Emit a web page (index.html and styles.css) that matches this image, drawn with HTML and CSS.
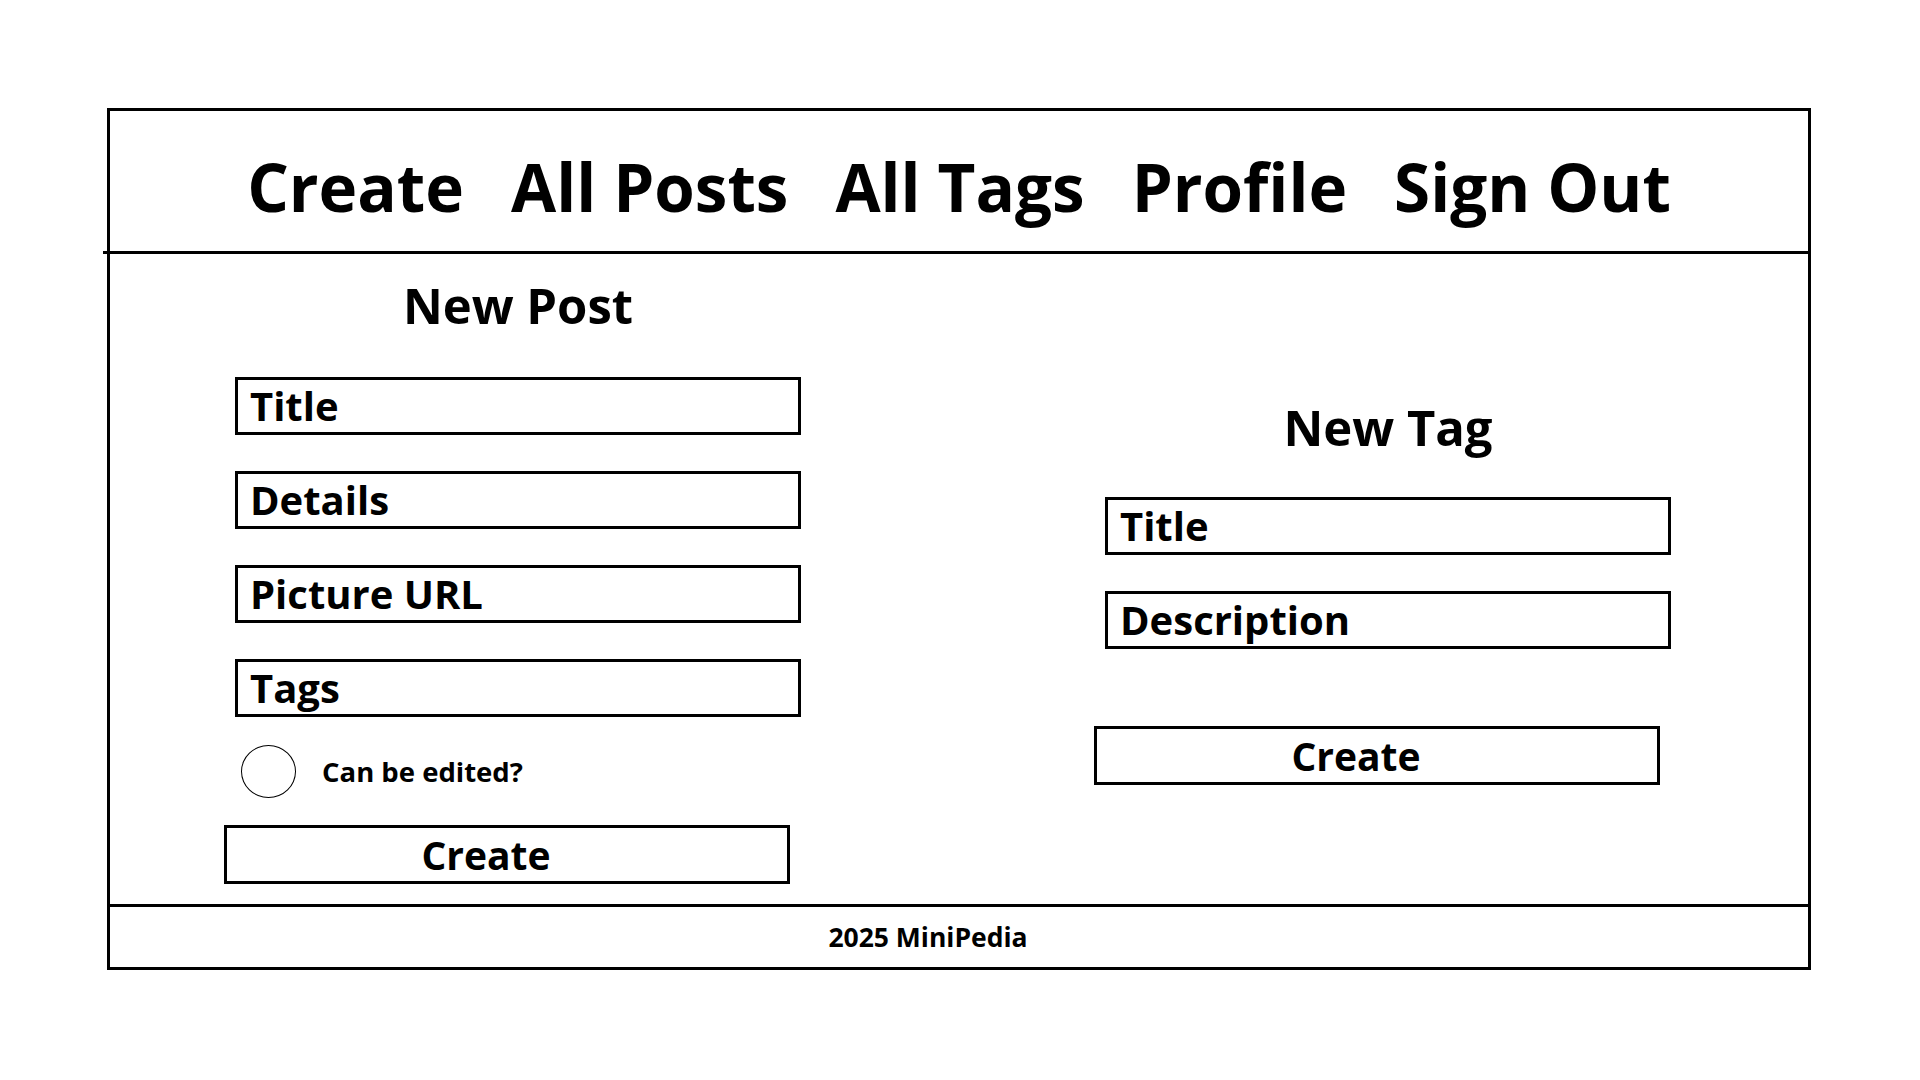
FILE: index.html
```html
<!DOCTYPE html>
<html lang="en">
<head>
<meta charset="utf-8">
<title>MiniPedia - Create</title>
<link rel="stylesheet" href="styles.css">
</head>
<body>
<div class="frame">
  <header class="header">
    <nav class="nav">
      <a class="nav-link">Create</a>
      <a class="nav-link">All Posts</a>
      <a class="nav-link">All Tags</a>
      <a class="nav-link">Profile</a>
      <a class="nav-link">Sign Out</a>
    </nav>
  </header>
  <main class="main">
    <section class="column column-post">
      <h2 class="heading">New Post</h2>
      <div class="fields">
        <div class="field">Title</div>
        <div class="field">Details</div>
        <div class="field">Picture URL</div>
        <div class="field">Tags</div>
      </div>
      <div class="check-row">
        <span class="radio"></span>
        <span class="check-label">Can be edited?</span>
      </div>
      <div class="button button-post">Create</div>
    </section>
    <section class="column column-tag">
      <h2 class="heading">New Tag</h2>
      <div class="fields">
        <div class="field">Title</div>
        <div class="field">Description</div>
      </div>
      <div class="button button-tag">Create</div>
    </section>
  </main>
  <footer class="footer">2025 MiniPedia</footer>
</div>
</body>
</html>
```
FILE: styles.css
```css
* {
  box-sizing: border-box;
}

html, body {
  margin: 0;
  padding: 0;
  background: #ffffff;
}

body {
  font-family: "Open Sans", "Noto Sans", sans-serif;
  font-weight: 700;
  color: #000000;
  width: 1920px;
  height: 1080px;
  overflow: hidden;
}

.frame {
  margin: 108px 0 0 107px;
  width: 1704px;
  height: 862px;
  border: 3px solid #000000;
  display: flex;
  flex-direction: column;
}

.header {
  position: relative;
  height: 143px;
  border-bottom: 3px solid #000000;
  padding-top: 43px;
  flex: none;
}

.header::after {
  content: "";
  position: absolute;
  left: -7px;
  bottom: -3px;
  width: 7px;
  height: 3px;
  background: #000000;
}

.nav {
  display: flex;
  justify-content: center;
  gap: 47px;
}

.nav-link {
  font-size: 65.5px;
  line-height: 66px;
  color: #000000;
  text-decoration: none;
  white-space: nowrap;
}

.main {
  flex: 1;
  display: flex;
  gap: 304px;
  padding-left: 125px;
}

.column {
  width: 566px;
  display: flex;
  flex-direction: column;
}

.column-post {
  padding-top: 27px;
}

.column-tag {
  padding-top: 149px;
}

.heading {
  margin: 0;
  font-size: 49px;
  line-height: 49px;
  font-weight: 700;
  text-align: center;
}

.fields {
  display: flex;
  flex-direction: column;
  gap: 36px;
}

.column-post .fields {
  margin-top: 47px;
}

.column-tag .fields {
  margin-top: 45px;
}

.field {
  height: 58px;
  border: 3px solid #000000;
  display: flex;
  align-items: center;
  padding-left: 12px;
  font-size: 40px;
  line-height: 40px;
  white-space: nowrap;
}

.check-row {
  display: flex;
  align-items: center;
  margin-top: 28px;
  padding-left: 6px;
  gap: 26px;
}

.radio {
  width: 55px;
  height: 53px;
  border: 1.5px solid #000000;
  border-radius: 50%;
  flex: none;
}

.check-label {
  font-size: 27.5px;
  line-height: 28px;
}

.button {
  width: 566px;
  height: 59px;
  margin-left: -11px;
  border: 3px solid #000000;
  display: flex;
  align-items: center;
  justify-content: center;
  padding-right: 42px;
  font-size: 39px;
  line-height: 39px;
}

.button-post {
  margin-top: 27px;
}

.button-tag {
  margin-top: 77px;
}

.footer {
  flex: none;
  height: 63px;
  border-top: 3px solid #000000;
  display: flex;
  align-items: center;
  justify-content: center;
  padding-right: 62px;
  font-size: 26.5px;
  line-height: 27px;
}
```
